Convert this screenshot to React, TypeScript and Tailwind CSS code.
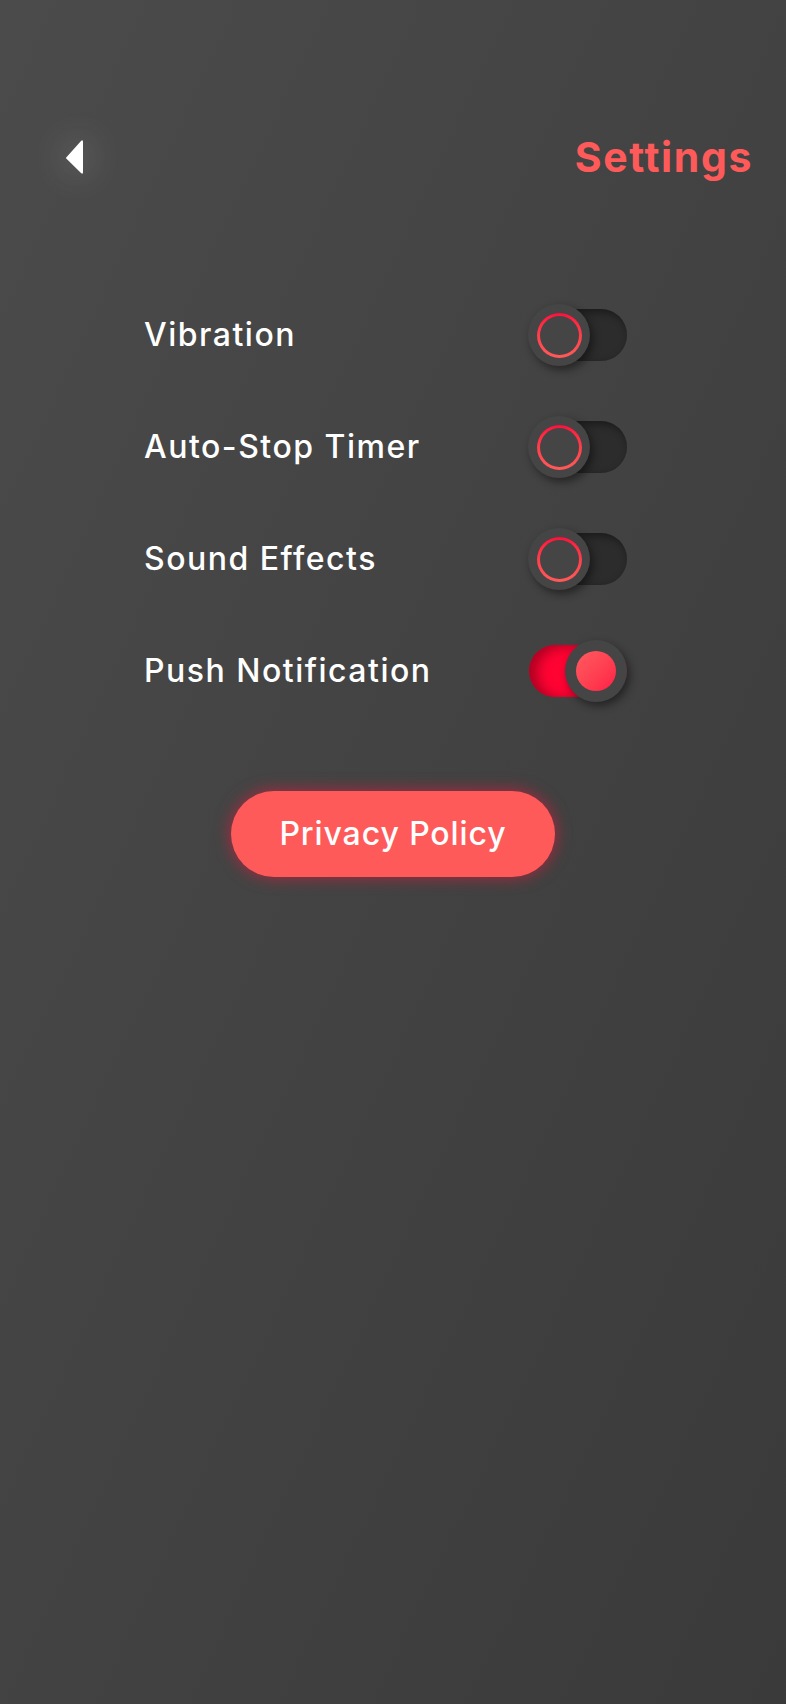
import React, { useState } from 'react';

const font = { fontFamily: 'Inter, "Open Sans", sans-serif' };

type ToggleProps = { on: boolean; onChange: () => void };

function Toggle({ on, onChange }: ToggleProps) {
    return (
        <button onClick={onChange} className="relative w-[99px] h-[62px] flex items-center justify-end shrink-0">
            {/* track */}
            <div
                className={
                    on
                        ? 'w-[98px] h-[52px] rounded-full bg-[#ff0333] shadow-[inset_8px_2px_12px_rgba(110,0,20,0.55)]'
                        : 'w-[98px] h-[52px] rounded-full bg-[#2c2c2c] shadow-[inset_3px_3px_8px_rgba(0,0,0,0.45)]'
                }
            />
            {/* knob */}
            <div
                className={
                    on
                        ? 'absolute right-0 top-0 w-[62px] h-[62px] rounded-full bg-[#454545] shadow-[3px_4px_8px_rgba(0,0,0,0.45)] flex items-center justify-center'
                        : 'absolute left-0 top-0 w-[62px] h-[62px] rounded-full bg-[#454545] shadow-[3px_4px_8px_rgba(0,0,0,0.45)] flex items-center justify-center'
                }
            >
                {on ? (
                    <div className="w-[40px] h-[40px] rounded-full bg-gradient-to-br from-[#ff5a60] to-[#ff1a45]" />
                ) : (
                    <div className="w-[45px] h-[45px] rounded-full p-[3px] bg-gradient-to-b from-[#ff0a3c] to-[#ff5a5a]">
                        <div className="w-full h-full rounded-full bg-[#454545]" />
                    </div>
                )}
            </div>
        </button>
    );
}

export default function App() {
    const [settings, setSettings] = useState([
        { label: 'Vibration', on: false },
        { label: 'Auto-Stop Timer', on: false },
        { label: 'Sound Effects', on: false },
        { label: 'Push Notification', on: true },
    ]);

    const flip = (i: number) =>
        setSettings(prev => prev.map((s, j) => (j === i ? { ...s, on: !s.on } : s)));

    return (
        <div className="w-full min-h-[1704px] bg-gradient-to-br from-[#4b4b4b] to-[#3a3a3a]" style={font}>
            {/* Header */}
            <div className="flex items-center justify-between pl-[65px] pr-[33px] pt-[128px] h-[186px]">
                <div className="h-[56px] flex items-center">
                    <svg width="18" height="36" viewBox="0 0 18 36" className="overflow-visible drop-shadow-[0_0_18px_rgba(255,255,255,0.4)]">
                        <path d="M1 18.8 L16 2 Q18 0 18 3 L18 33 Q18 36 16 34 L1 19.2 Z" fill="#ffffff" />
                    </svg>
                </div>
                <h1 className="text-[41px] font-bold text-[#ff5a5a] tracking-[1.6px] leading-[56px]">Settings</h1>
            </div>

            {/* Toggles */}
            <div className="ml-[144px] w-[483px] mt-[93px] flex flex-col">
                {settings.map((s, i) => (
                    <div key={s.label} className="h-[112px] flex items-center justify-between">
                        <span className="text-white text-[32px] font-medium tracking-[1.5px] leading-none">{s.label}</span>
                        <Toggle on={s.on} onChange={() => flip(i)} />
                    </div>
                ))}
            </div>

            {/* Privacy button */}
            <div className="flex justify-center mt-[64px]">
                <button className="w-[324px] h-[86px] rounded-full bg-[#ff5a5a] text-white text-[32px] font-medium tracking-[0.9px] shadow-[0_0_16px_rgba(255,20,60,0.6)]">
                    Privacy Policy
                </button>
            </div>
        </div>
    );
}
